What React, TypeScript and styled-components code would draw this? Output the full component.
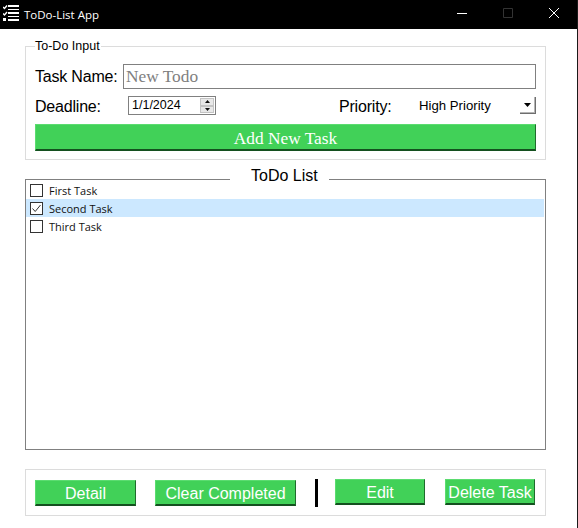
import React from 'react';
import styled, { createGlobalStyle } from 'styled-components';

const GlobalStyle = createGlobalStyle`
  html, body {
    margin: 0;
    padding: 0;
    background: #ffffff;
    overflow: hidden;
  }
`;

const green = '#41d158';

const Window = styled.div`
  width: 578px;
  height: 528px;
  box-sizing: border-box;
  background: #ffffff;
  border-right: 1px solid #1a1a1a;
  font-family: 'Liberation Sans', Arial, sans-serif;
  color: #000000;
  display: flex;
  flex-direction: column;
`;

const TitleBar = styled.div`
  height: 29px;
  flex: none;
  background: #000000;
  color: #ffffff;
  display: flex;
  align-items: center;
  padding-left: 3px;
`;

const AppIcon = styled.svg`
  width: 16px;
  height: 17px;
  flex: none;
  margin-top: -2px;
`;

const AppTitle = styled.span`
  font-family: 'Open Sans', sans-serif;
  font-size: 11.5px;
  margin-left: 5px;
  flex: 1;
`;

const WindowControl = styled.div`
  width: 46px;
  height: 26px;
  align-self: flex-start;
  display: flex;
  align-items: center;
  justify-content: center;
`;

const Content = styled.div`
  flex: 1;
  display: flex;
  flex-direction: column;
  padding: 10px 31px 0 25px;
`;

const InputGroup = styled.fieldset`
  margin: 0;
  padding: 11px 9px 8px 9px;
  height: 121px;
  box-sizing: border-box;
  border: 1px solid #dcdcdc;
  display: flex;
  flex-direction: column;
`;

const InputLegend = styled.legend`
  padding: 0 1px 0 0;
  font-size: 12.5px;
  line-height: 14px;
`;

const NameRow = styled.div`
  height: 25px;
  display: flex;
  align-items: center;
  gap: 6px;
`;

const FieldLabel = styled.label`
  font-size: 16px;
  line-height: 18px;
  letter-spacing: -0.2px;
  flex: none;
`;

const NameLabel = styled(FieldLabel)`
  width: 82px;
  white-space: nowrap;
`;

const TextField = styled.div`
  flex: 1;
  height: 25px;
  box-sizing: border-box;
  border: 1px solid #808080;
  padding-left: 2px;
  font-family: 'Liberation Serif', serif;
  font-size: 17.33px;
  line-height: 23px;
  color: #808080;
`;

const OptionsRow = styled.div`
  height: 19px;
  margin-top: 7px;
  display: flex;
  align-items: center;
`;

const DeadlineLabel = styled(FieldLabel)`
  width: 93px;
  padding-top: 2px;
`;

const DateField = styled.div`
  width: 88px;
  height: 19px;
  flex: none;
  box-sizing: border-box;
  border: 1px solid #808080;
  padding-left: 3px;
  font-size: 12.5px;
  line-height: 17px;
  display: flex;
  align-items: center;
  justify-content: space-between;
`;

const Spinner = styled.div`
  width: 14px;
  height: 15px;
  margin-right: 1px;
  display: flex;
  flex-direction: column;
`;

const SpinPart = styled.div`
  flex: 1;
  box-sizing: border-box;
  background: #e8e8e8;
  border: 1px solid #c4c4c4;
  display: flex;
  align-items: center;
  justify-content: center;
`;

const PriorityLabel = styled(FieldLabel)`
  margin-left: 123px;
  width: 80px;
  padding-top: 2px;
`;

const PriorityValue = styled.span`
  font-size: 13.2px;
  line-height: 16px;
  flex: 1;
`;

const DropButton = styled.div`
  width: 16px;
  height: 17px;
  flex: none;
  box-sizing: border-box;
  background: #ffffff;
  border-right: 1px solid #6e6e6e;
  border-bottom: 1px solid #6e6e6e;
  box-shadow: inset -1px -1px 0 #b4b4b4;
  display: flex;
  align-items: center;
  justify-content: center;
`;

const GreenButton = styled.button<{ $w?: number; $h?: number; $ml?: number }>`
  width: ${p => (p.$w ? `${p.$w}px` : '100%')};
  height: ${p => p.$h ?? 26}px;
  margin-left: ${p => p.$ml ?? 0}px;
  flex: none;
  box-sizing: border-box;
  padding: 3px 0 0 0;
  background: ${green};
  color: #ffffff;
  border: 0;
  border-top: 1px solid #5bdc70;
  border-left: 1px solid #5bdc70;
  border-right: 1px solid #1f6b2c;
  border-bottom: 2px solid #14501f;
  font-family: 'Liberation Sans', Arial, sans-serif;
  font-size: 16px;
  white-space: nowrap;
`;

const AddButton = styled(GreenButton)`
  margin-top: 9px;
  font-family: 'Liberation Serif', serif;
  font-size: 17.33px;
`;

// Edit and Delete sit one pixel higher than the other two
const UpperButton = styled(GreenButton)`
  align-self: flex-start;
  margin-top: 9px;
`;

const ListGroup = styled.fieldset`
  margin: 10px 0 0 0;
  padding: 0 1px 0 0;
  height: 280px;
  box-sizing: border-box;
  border: 1px solid #808080;
`;

const ListLegend = styled.legend`
  margin-left: 204px;
  padding: 0 11px 0 21px;
  font-size: 16px;
  line-height: 18px;
  transform: translateY(-3px);
`;

const TaskList = styled.ul`
  list-style: none;
  margin: -7px 0 0 0;
  padding: 0;
`;

const TaskRow = styled.li<{ $selected?: boolean }>`
  height: 18px;
  padding-left: 4px;
  display: flex;
  align-items: center;
  gap: 6px;
  background: ${p => (p.$selected ? '#cce8ff' : 'transparent')};
  font-family: 'Open Sans', sans-serif;
  font-size: 11px;
  color: #111111;
`;

const CheckBox = styled.span`
  width: 13px;
  height: 13px;
  flex: none;
  box-sizing: border-box;
  border: 1px solid #333333;
  background: #ffffff;
  display: flex;
  align-items: center;
  justify-content: center;
`;

const ActionBar = styled.div`
  margin-top: 19px;
  height: 47px;
  box-sizing: border-box;
  border: 1px solid #dcdcdc;
  padding: 0 10px 0 9px;
  display: flex;
  align-items: center;
`;

const Divider = styled.div`
  width: 3px;
  height: 28px;
  flex: none;
  background: #000000;
  margin: 0 17px 0 19px;
`;

const SmallArrow = ({ up }: { up?: boolean }) => (
  <svg width="5" height="3" viewBox="0 0 5 3">
    <path d={up ? 'M2.5 0L5 3H0z' : 'M0 0h5L2.5 3z'} fill="#111" />
  </svg>
);

const tasks = [
  { id: 1, title: 'First Task', done: false },
  { id: 2, title: 'Second Task', done: true },
  { id: 3, title: 'Third Task', done: false },
];

export default function App() {
  return (
    <Window>
      <GlobalStyle />
      <TitleBar>
        <AppIcon viewBox="0 0 16 17">
          <path d="M5 0h11v2H5zM5 4h11v1H5zM5 7h11v2H5zM5 11h11v1H5zM5 14h11v2H5zM0 13h3v3H0z" fill="#fff" />
          <path d="M0 2l1.5 1.5L4 .5M0 8.5L1.5 10L4 7" stroke="#fff" strokeWidth="1.4" fill="none" />
        </AppIcon>
        <AppTitle>ToDo-List App</AppTitle>
        <WindowControl>
          <svg width="10" height="10" viewBox="0 0 10 10">
            <path d="M0 5.5h10" stroke="#fff" fill="none" />
          </svg>
        </WindowControl>
        <WindowControl>
          <svg width="10" height="10" viewBox="0 0 10 10">
            <path d="M.5.5h9v9h-9z" stroke="#333" fill="none" />
          </svg>
        </WindowControl>
        <WindowControl>
          <svg width="10" height="10" viewBox="0 0 10 10">
            <path d="M0 0l10 10M10 0L0 10" stroke="#fff" fill="none" />
          </svg>
        </WindowControl>
      </TitleBar>
      <Content>
        <InputGroup>
          <InputLegend>To-Do Input</InputLegend>
          <NameRow>
            <NameLabel>Task Name:</NameLabel>
            <TextField>New Todo</TextField>
          </NameRow>
          <OptionsRow>
            <DeadlineLabel>Deadline:</DeadlineLabel>
            <DateField>
              1/1/2024
              <Spinner>
                <SpinPart><SmallArrow up /></SpinPart>
                <SpinPart><SmallArrow /></SpinPart>
              </Spinner>
            </DateField>
            <PriorityLabel>Priority:</PriorityLabel>
            <PriorityValue>High Priority</PriorityValue>
            <DropButton>
              <svg width="7" height="4" viewBox="0 0 7 4">
                <path d="M0 0h7L3.5 4z" fill="#000" />
              </svg>
            </DropButton>
          </OptionsRow>
          <AddButton $h={27}>Add New Task</AddButton>
        </InputGroup>
        <ListGroup>
          <ListLegend>ToDo List</ListLegend>
          <TaskList>
            {tasks.map(task => (
              <TaskRow key={task.id} $selected={task.done}>
                <CheckBox>
                  {task.done && (
                    <svg width="11" height="11" viewBox="0 0 11 11">
                      <path d="M1.5 5.5L4.2 8.5L9.5 2" stroke="#333" fill="none" />
                    </svg>
                  )}
                </CheckBox>
                {task.title}
              </TaskRow>
            ))}
          </TaskList>
        </ListGroup>
        <ActionBar>
          <GreenButton $w={101}>Detail</GreenButton>
          <GreenButton $w={141} $ml={19}>Clear Completed</GreenButton>
          <Divider />
          <UpperButton $w={90}>Edit</UpperButton>
          <UpperButton $w={90} $ml={20}>Delete Task</UpperButton>
        </ActionBar>
      </Content>
    </Window>
  );
}
